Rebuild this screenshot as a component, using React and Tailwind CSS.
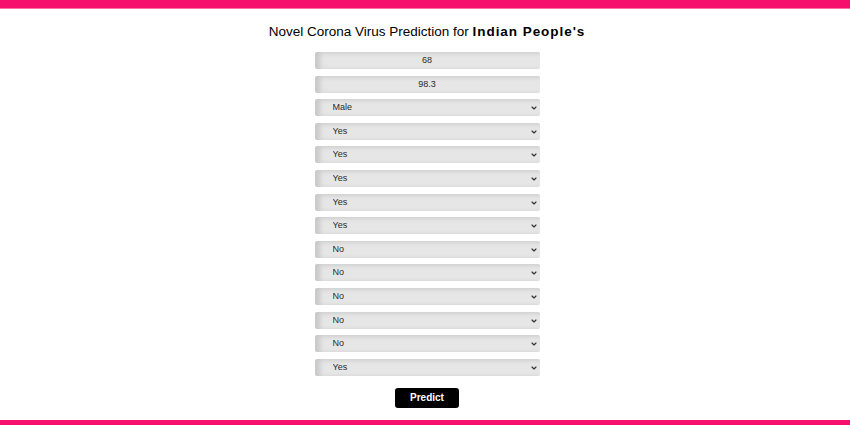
import { ChevronDown } from 'lucide-react';

const FIELDS = [
    { type: 'input', value: '68' },
    { type: 'input', value: '98.3' },
    { type: 'select', value: 'Male', options: ['Male', 'Female'] },
    { type: 'select', value: 'Yes' },
    { type: 'select', value: 'Yes' },
    { type: 'select', value: 'Yes' },
    { type: 'select', value: 'Yes' },
    { type: 'select', value: 'Yes' },
    { type: 'select', value: 'No' },
    { type: 'select', value: 'No' },
    { type: 'select', value: 'No' },
    { type: 'select', value: 'No' },
    { type: 'select', value: 'No' },
    { type: 'select', value: 'Yes' },
];

const BOX =
    'block w-full h-[17px] p-0 leading-[17px] bg-[#e6e6e6] rounded-[2px] text-[9px] text-[#2a2a2a] shadow-[inset_5px_1px_5px_rgba(0,0,0,0.13)] outline-none';

export default function App() {
    return (
        <div className="w-[850px] h-[425px] overflow-hidden bg-white flex flex-col font-['Liberation_Sans',Arial,sans-serif]">
            <div className="shrink-0 h-[9px] bg-[#f60f6c] border-b border-[#ff6fa6]" />

            <div className="flex-1 min-h-0 pl-[4px] flex flex-col items-center">
                <h1 className="mt-[14px] text-[13.5px] leading-[18px] text-black">
                    Novel Corona Virus Prediction for{' '}
                    <span className="font-black tracking-[0.95px]">Indian People's</span>
                </h1>

                <form className="mt-[11px] w-[225px] flex flex-col gap-[6.6px]" onSubmit={(e) => e.preventDefault()}>
                    {FIELDS.map((f, i) =>
                        f.type === 'input' ? (
                            <input key={i} type="text" defaultValue={f.value} className={`${BOX} text-center`} />
                        ) : (
                            <div key={i} className="relative h-[17px]">
                                <select defaultValue={f.value} className={`${BOX} appearance-none pl-[18px]`}>
                                    {(f.options ?? ['Yes', 'No']).map((o) => (
                                        <option key={o}>{o}</option>
                                    ))}
                                </select>
                                <ChevronDown
                                    size={8}
                                    strokeWidth={3.5}
                                    className="absolute right-[2px] top-[5px] text-[#333] pointer-events-none"
                                />
                            </div>
                        )
                    )}
                </form>

                <button className="mt-[12px] w-[64px] h-[20px] bg-black text-white text-[10px] font-bold rounded-[3px]">
                    Predict
                </button>
            </div>

            <div className="shrink-0 h-[5px] bg-[#f60f6c]" />
        </div>
    );
}
